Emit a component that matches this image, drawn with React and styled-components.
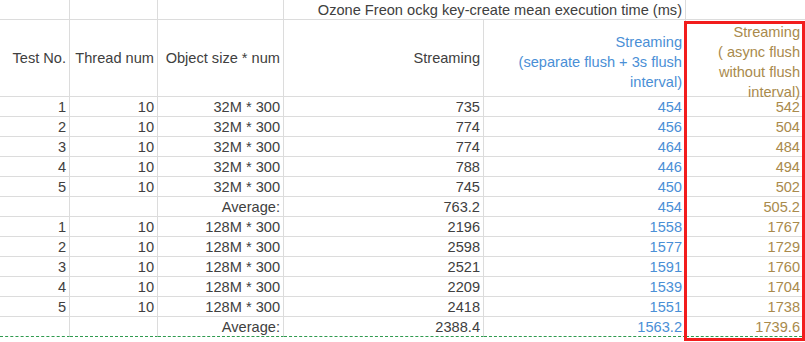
import React from 'react';
import styled, { createGlobalStyle } from 'styled-components';

const GlobalStyle = createGlobalStyle`
  html, body {
    margin: 0;
    padding: 0;
    background: #fff;
  }
  body {
    font-family: "Liberation Sans", Arial, sans-serif;
  }
`

const Sheet = styled.div`
  position: relative;
  width: 805px;
  height: 342px;
  overflow: hidden;
  background: #fff;
`

const Grid = styled.div`
  display: grid;
  grid-template-columns: 70px 88px 126px 200px 202px 121px;
  grid-template-rows: 20px 77px repeat(12, 20px);
`

const toneColor = {
  blue: '#4a8fd6',
  gold: '#a98a4c',
}

const Cell = styled.div`
  box-sizing: border-box;
  display: flex;
  align-items: center;
  justify-content: flex-end;
  text-align: right;
  padding-top: ${p => (p.$wrap ? '7px' : '0')};
  padding-right: ${p => (p.$tone === 'gold' ? '6px' : '3px')};
  border-right: 1px solid #dcdcdc;
  border-bottom: ${p => (p.$last ? '1px dashed #2f9a4f' : '1px solid #dcdcdc')};
  font-size: 14.6px;
  line-height: 20px;
  color: ${p => toneColor[p.$tone] || '#404040'};
  white-space: nowrap;
  grid-column: ${p => (p.$span ? `span ${p.$span}` : 'auto')};
`

const Marker = styled.div`
  position: absolute;
  left: 684px;
  top: 21px;
  width: 121px;
  height: 320px;
  box-sizing: border-box;
  border: 3px solid #f21d1d;
  pointer-events: none;
`

const small = [735, 774, 774, 788, 745]
const smallSep = [454, 456, 464, 446, 450]
const smallAsync = [542, 504, 484, 494, 502]
const big = [2196, 2598, 2521, 2209, 2418]
const bigSep = [1558, 1577, 1591, 1539, 1551]
const bigAsync = [1767, 1729, 1760, 1704, 1738]

const Block = ({ size, stream, sep, async, avg, last }) => (
  <>
    {stream.map((v, i) => (
      <React.Fragment key={i}>
        <Cell>{i + 1}</Cell>
        <Cell>10</Cell>
        <Cell>{size} * 300</Cell>
        <Cell>{v}</Cell>
        <Cell $tone="blue">{sep[i]}</Cell>
        <Cell $tone="gold">{async[i]}</Cell>
      </React.Fragment>
    ))}
    <Cell $last={last}></Cell>
    <Cell $last={last}></Cell>
    <Cell $last={last}>Average:</Cell>
    <Cell $last={last}>{avg[0]}</Cell>
    <Cell $last={last} $tone="blue">{avg[1]}</Cell>
    <Cell $last={last} $tone="gold">{avg[2]}</Cell>
  </>
)

export default function App() {
  return (
    <Sheet>
      <GlobalStyle />
      <Grid>
        <Cell></Cell>
        <Cell></Cell>
        <Cell></Cell>
        <Cell $span={2}>Ozone Freon ockg key-create mean execution time (ms)</Cell>
        <Cell></Cell>

        <Cell>Test No.</Cell>
        <Cell>Thread num</Cell>
        <Cell>Object size * num</Cell>
        <Cell>Streaming</Cell>
        <Cell $wrap $tone="blue">
          <span>Streaming<br />(separate flush + 3s flush<br />interval)</span>
        </Cell>
        <Cell $wrap $tone="gold">
          <span>Streaming<br />( async flush<br />without flush<br />interval)</span>
        </Cell>

        <Block size="32M" stream={small} sep={smallSep} async={smallAsync} avg={['763.2', '454', '505.2']} />
        <Block size="128M" stream={big} sep={bigSep} async={bigAsync} avg={['2388.4', '1563.2', '1739.6']} last />
      </Grid>
      <Marker />
    </Sheet>
  )
}
